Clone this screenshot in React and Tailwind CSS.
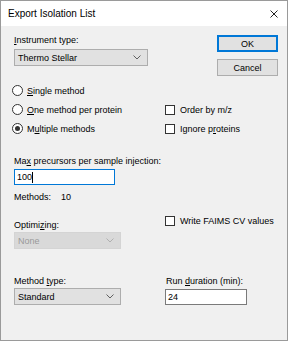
import React from 'react'

const Chevron = ({ color = '#606060' }) => (
  <svg width="8" height="5" viewBox="0 0 8 5" className="shrink-0">
    <path d="M0.5 0.5 L4 4 L7.5 0.5" fill="none" stroke={color} strokeWidth="1" />
  </svg>
)

function Combo({ value, width, disabled }) {
  return (
    <div
      className={`h-[17px] flex items-center justify-between pl-[3px] pr-[6px] border ${
        disabled ? 'bg-[#d9d9d9] border-[#d4d4d4] text-[#9a9a9a]' : 'bg-[#e1e1e1] border-[#adadad] text-black'
      }`}
      style={{ width }}
    >
      <span>{value}</span>
      <Chevron color={disabled ? '#b0b0b0' : '#606060'} />
    </div>
  )
}

function Radio({ checked, children }) {
  return (
    <div className="h-[19px] flex items-center gap-[4px]">
      <div className="w-[11px] h-[11px] rounded-full border border-[#333] bg-white flex items-center justify-center">
        {checked && <div className="w-[5px] h-[5px] rounded-full bg-[#333]" />}
      </div>
      <span>{children}</span>
    </div>
  )
}

function Check({ children }) {
  return (
    <div className="h-[19px] flex items-center gap-[5px]">
      <div className="w-[10px] h-[10px] border border-[#333] bg-white" />
      <span>{children}</span>
    </div>
  )
}

const U = ({ children }) => <span className="underline underline-offset-[1px]">{children}</span>

export default function App() {
  return (
    <div
      className="w-[288px] h-[341px] border border-[#9a9a9a] bg-[#f0f0f0] flex flex-col text-[9px] leading-[12px] text-black"
      style={{ fontFamily: '"Liberation Sans", Arial, sans-serif' }}
    >
      {/* title bar */}
      <div className="h-[25px] bg-white flex items-center justify-between pl-[7px] pr-[9px] shrink-0">
        <span className="text-[10px]">Export Isolation List</span>
        <svg width="8" height="8" viewBox="0 0 8 8">
          <path d="M0.5 0.5 L7.5 7.5 M7.5 0.5 L0.5 7.5" stroke="#222" strokeWidth="1" />
        </svg>
      </div>

      {/* instrument + buttons */}
      <div className="flex justify-between pl-[13px] pr-[9px]">
        <div className="pt-[8px]">
          <div>
            <U>I</U>nstrument type:
          </div>
          <div className="mt-[3px]">
            <Combo value="Thermo Stellar" width={134} />
          </div>
        </div>
        <div className="pt-[9px] flex flex-col gap-[7px]">
          <div className="w-[61px] h-[17px] bg-[#e1e1e1] border-2 border-[#0078d7] flex items-center justify-center">
            OK
          </div>
          <div className="w-[61px] h-[17px] bg-[#e1e1e1] border border-[#adadad] flex items-center justify-center">
            Cancel
          </div>
        </div>
      </div>

      {/* radios and checkboxes */}
      <div className="mt-[5px] flex pl-[11px]">
        <div className="w-[153px] flex flex-col">
          <Radio>
            <U>S</U>ingle method
          </Radio>
          <Radio>
            <U>O</U>ne method per protein
          </Radio>
          <Radio checked>
            M<U>u</U>ltiple methods
          </Radio>
        </div>
        <div className="flex flex-col pt-[19px]">
          <Check>Order by m/z</Check>
          <Check>
            Ignore p<U>r</U>oteins
          </Check>
        </div>
      </div>

      {/* max precursors */}
      <div className="pl-[13px] mt-[17px]">
        <div>
          Ma<U>x</U> precursors per sample injection:
        </div>
        <div className="mt-[2px] w-[101px] h-[16px] bg-white border border-[#0078d7] flex items-center pl-[2px]">
          <span>100</span>
          <span className="w-px h-[11px] bg-black" />
        </div>
        <div className="mt-[6px] flex">
          <span className="w-[47px]">Methods:</span>
          <span>10</span>
        </div>
      </div>

      {/* optimizing + faims */}
      <div className="flex pl-[13px]">
        <div className="w-[151px] pt-[17px]">
          <div className="leading-[11px]">
            Optimi<U>z</U>ing:
          </div>
          <div className="mt-[1px]">
            <Combo value="None" width={107} disabled />
          </div>
        </div>
        <div className="pt-[8px]">
          <Check>Write FAIMS CV values</Check>
        </div>
      </div>

      {/* method type + run duration */}
      <div className="flex pl-[13px] mt-[26px]">
        <div className="w-[151px]">
          <div>
            Method <U>t</U>ype:
          </div>
          <div className="mt-[1px]">
            <Combo value="Standard" width={107} />
          </div>
        </div>
        <div className="pl-[1px]">
          <div>
            Run <U>d</U>uration (min):
          </div>
          <div className="mt-[2px] -ml-[1px] w-[82px] h-[16px] bg-white border border-[#7a7a7a] flex items-center pl-[2px]">
            24
          </div>
        </div>
      </div>
    </div>
  )
}
